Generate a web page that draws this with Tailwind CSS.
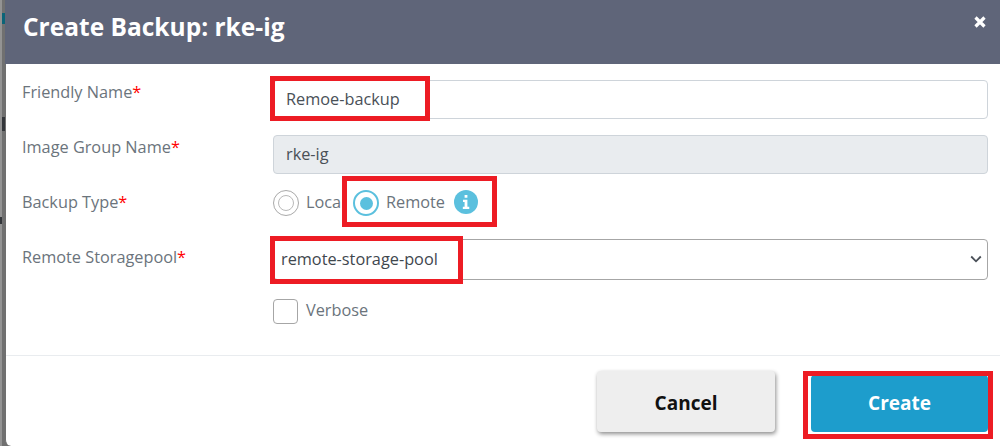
<!DOCTYPE html>
<html>
<head>
<meta charset="utf-8">
<script src="https://cdn.jsdelivr.net/npm/@tailwindcss/browser@4"></script>
</head>
<body class="m-0 bg-white">
<div class="relative flex h-[446px] w-[1000px] overflow-hidden bg-[#707070] font-['Open_Sans',sans-serif] text-[16.3px] text-[#6b747c]">
  <div class="relative w-[5px] shrink-0">
    <div class="absolute left-0 top-0 h-full w-[2px] bg-[#939393]"></div>
    <div class="absolute left-[2px] top-[13px] h-[11px] w-[3px] bg-[#0b6478]"></div>
    <div class="absolute left-[2px] top-[117px] h-[14px] w-[3px] bg-[#33363a]"></div>
    <div class="absolute left-0 top-[217px] h-[7px] w-[2px] bg-[#33363a]"></div>
  </div>
  <div class="flex h-[446px] flex-1 flex-col">
    <header class="flex h-[64px] shrink-0 items-start justify-between bg-[#5f6579] pl-[18px] pr-[14px]">
      <h1 class="mt-[10px] text-[24.5px] font-bold leading-[33px] text-white">Create Backup: rke-ig</h1>
      <svg class="mt-[16px]" width="12" height="12" viewBox="0 0 12 12" aria-hidden="true"><path d="M1.500 1.500 10.500 10.500M10.500 1.500 1.500 10.500" stroke="#fff" stroke-width="3.200" fill="none"/></svg>
    </header>
    <div class="flex flex-1 flex-col rounded-bl-md border-l border-[#707070] bg-white">
      <div class="flex h-[292px] shrink-0 flex-col border-b border-[#e9ecef] pl-[16px] pr-[12px] pt-[16px]">
        <div class="flex h-[55px] items-start">
          <label class="w-[251px] shrink-0 leading-[24px]">Friendly Name<span class="text-[#ff0000]">*</span></label>
          <div class="flex h-[39px] flex-1 items-center rounded-[4px] border border-[#ced4da] bg-white pb-[1px] pl-[12px] text-[#495057]">Remoe-backup</div>
        </div>
        <div class="flex h-[55px] items-start">
          <label class="w-[251px] shrink-0 leading-[24px]">Image Group Name<span class="text-[#ff0000]">*</span></label>
          <div class="flex h-[39px] flex-1 items-center rounded-[4px] border border-[#ced4da] bg-[#e9ecef] pb-[1px] pl-[12px] text-[#495057]">rke-ig</div>
        </div>
        <div class="flex h-[49px] items-start">
          <label class="w-[251px] shrink-0 leading-[24px]">Backup Type<span class="text-[#ff0000]">*</span></label>
          <div class="flex items-center">
            <span class="flex size-[26px] items-center justify-center rounded-full border border-[#a9a9a9]"><span class="size-[16px] rounded-full border border-[#b9b9b9]"></span></span>
            <span class="mb-[2px] ml-[7px] w-[35px] leading-[24px]">Local</span>
            <span class="ml-[12px] flex size-[26px] items-center justify-center rounded-full border-2 border-[#5bc0de]"><span class="size-[13px] rounded-full bg-[#5bc0de]"></span></span>
            <span class="mb-[2px] ml-[7px] leading-[24px]">Remote</span>
            <span class="ml-[9px] flex size-[24px] items-center justify-center self-start rounded-full bg-[#5bc0de]">
              <svg width="8" height="14" viewBox="0 0 8 15" aria-hidden="true"><path d="M2.500 0h3v3h-3zM.8 5H5.500v7.500H7.500V15H.6v-2.500h1.900V7.500H.8z" fill="#fff"/></svg>
            </span>
          </div>
        </div>
        <div class="flex h-[59px] items-start">
          <label class="mt-[6px] w-[251px] shrink-0 leading-[24px]">Remote Storagepool<span class="text-[#ff0000]">*</span></label>
          <div class="flex h-[41px] flex-1 items-center justify-between rounded-[4px] border border-[#a6a6a6] bg-white pb-[1px] pl-[7px] pr-[5px] text-[#3f474e]">
            <span>remote-storage-pool</span>
            <svg width="12" height="8" viewBox="0 0 12 8" aria-hidden="true"><path d="M1.200 1.500 6 6.300l4.800-4.800" stroke="#4a5058" stroke-width="1.800" fill="none"/></svg>
          </div>
        </div>
        <div class="flex items-center pl-[251px]">
          <span class="size-[25px] rounded-[4px] border border-[#a6a6a6]"></span>
          <span class="mb-[2px] ml-[8px] leading-[24px]">Verbose</span>
        </div>
      </div>
      <footer class="flex flex-1 items-start pl-[591px] pt-[15px]">
        <button class="flex h-[61px] w-[178px] items-center justify-center rounded-[4px] bg-[#eeeeee] pt-[3px] text-[19px] font-bold text-[#111111] shadow-[1px_2px_4px_rgba(0,0,0,0.45)]">Cancel</button>
        <button class="ml-[36px] mt-[4px] flex h-[57px] w-[177px] items-center justify-center rounded-[4px] bg-[#1d9dcc] text-[19px] font-bold text-white">Create</button>
      </footer>
    </div>
  </div>
  <div class="pointer-events-none absolute left-[270px] top-[76px] h-[45px] w-[160px] border-[5px] border-[#ed1c24]"></div>
  <div class="pointer-events-none absolute left-[342px] top-[176px] h-[51px] w-[155px] border-[5px] border-[#ed1c24]"></div>
  <div class="pointer-events-none absolute left-[270px] top-[236px] h-[48px] w-[193px] border-[5px] border-[#ed1c24]"></div>
  <div class="pointer-events-none absolute left-[803px] top-[371px] h-[68px] w-[190px] border-[5px] border-[#ed1c24]"></div>
</div>
</body>
</html>
